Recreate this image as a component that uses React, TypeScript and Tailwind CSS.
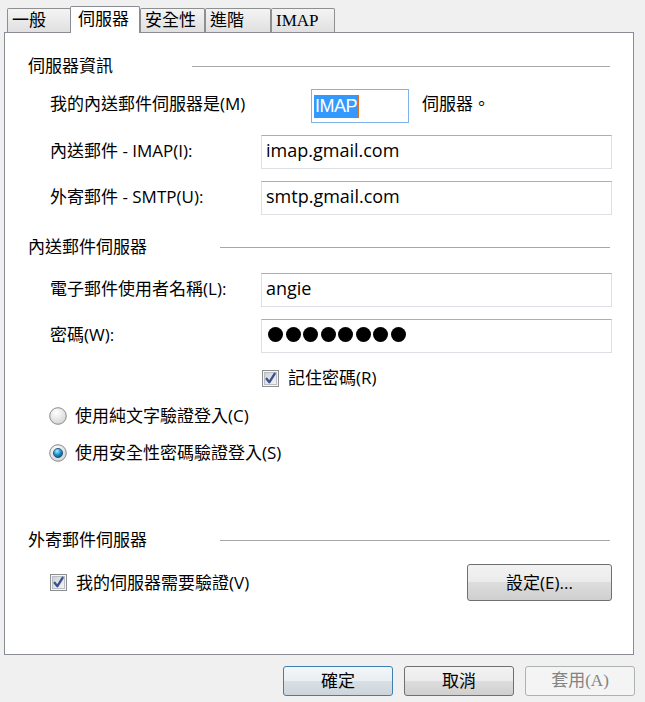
import React from "react"

const font = "font-['Open_Sans','Noto_Sans_CJK_TC',sans-serif]"
const serif = "font-['Liberation_Serif','Noto_Sans_CJK_TC',serif]"

const Tab = ({ label, active, w }: { label: string; active?: boolean; w: string }) => {
    if (active) {
        return (
            <div className={`${w} -ml-[1px] h-[27px] -mb-[1px] relative z-10 bg-white border border-b-0 border-[#898c95] rounded-t-[2px] pl-[7px] pt-[1px] text-[17px] leading-[24px] text-black`}>
                {label}
            </div>
        )
    }
    return (
        <div className={`${w} h-[24px] bg-[linear-gradient(to_bottom,#f4f4f4,#e0e0e0)] border border-b-0 border-[#8e8f8f] rounded-t-[2px] pl-[4px] text-[17px] leading-[24px] text-black`}>
            {label}
        </div>
    )
}

const SectionHeader = ({ title, w }: { title: string; w: string }) => (
    <div className="flex items-center h-[26px] pl-[23px] pr-[23px]">
        <div className={`${w} text-[17px] text-black`}>{title}</div>
        <div className="flex-1 h-px bg-[#a8a8a8]" />
    </div>
)

const TextBox = ({ children }: { children?: React.ReactNode }) => (
    <div className="w-[351px] h-[34px] border border-[#dcdfe3] border-t-[#abadb3] bg-white flex items-center pl-[4px] pb-[3px] text-[18px] text-black">
        {children}
    </div>
)

const Check = () => (
    <svg width="17" height="17" viewBox="0 0 17 17">
        <defs>
            <linearGradient id="cbg" x1="0" y1="0" x2="1" y2="1">
                <stop offset="0" stopColor="#cbcfd5" />
                <stop offset="1" stopColor="#f6f6f6" />
            </linearGradient>
        </defs>
        <rect x="0.5" y="0.5" width="16" height="16" fill="#f6f6f6" stroke="#8e8f8f" />
        <rect x="2.5" y="2.5" width="12" height="12" fill="url(#cbg)" stroke="#b9bec6" />
        <path d="M4.6 8.8 L7.4 12.2 L12.6 3.8" fill="none" stroke="#3b4f8c" strokeWidth="2.3" strokeLinecap="round" strokeLinejoin="round" />
    </svg>
)

const Radio = ({ on }: { on?: boolean }) => (
    <svg width="18" height="18" viewBox="0 0 18 18">
        <defs>
            <radialGradient id="rbg" cx="0.4" cy="0.3" r="0.8">
                <stop offset="0" stopColor="#ffffff" />
                <stop offset="1" stopColor="#cfcfcf" />
            </radialGradient>
            <radialGradient id="rdot" cx="0.4" cy="0.3" r="0.8">
                <stop offset="0" stopColor="#a6ecff" />
                <stop offset="0.5" stopColor="#1f8fd0" />
                <stop offset="1" stopColor="#0a3f6e" />
            </radialGradient>
        </defs>
        <circle cx="9" cy="9" r="8.3" fill="url(#rbg)" stroke="#8a8a8a" />
        {on && <circle cx="9" cy="9" r="4.6" fill="url(#rdot)" stroke="#17486f" strokeWidth="0.8" />}
    </svg>
)

const btn = "h-[30px] w-[110px] rounded-[3px] border text-[17px] flex items-center justify-center"
const grayGrad = "bg-[linear-gradient(to_bottom,#f2f2f2_0%,#ebebeb_50%,#dddddd_50%,#cfcfcf_100%)]"

export default function App() {
    return (
        <div className={`w-[645px] h-[702px] bg-[#f0f0f0] flex flex-col ${font}`}>

            <div className={`h-[32px] flex items-end pl-[7px] ${serif}`}>
                <Tab label="一般" w="w-[64px]" />
                <Tab label="伺服器" w="w-[70px]" active />
                <Tab label="安全性" w="w-[65px]" />
                <Tab label="進階" w="w-[66px]" />
                <Tab label="IMAP" w="w-[64px]" />
            </div>

            <div className="ml-[4px] w-[630px] h-[623px] border border-[#898c95] bg-white flex flex-col">

                <div className="mt-[20px]">
                    <SectionHeader title="伺服器資訊" w="w-[164px]" />
                </div>

                <div className="mt-[10px] h-[34px] flex items-center pl-[45px] text-[17px] text-black">
                    <div className="w-[261px] -mt-[4px]">我的內送郵件伺服器是(M)</div>
                    <div className="w-[98px] h-[34px] border border-[#7eb4ea] bg-white flex items-center pl-[2px]">
                        <span className="bg-[#3399ff] text-white text-[18px] leading-[23px] px-[1px] font-['Liberation_Sans',sans-serif] tracking-[-0.5px]">IMAP</span>
                        <span className="w-px h-[23px] bg-[#e07020]" />
                    </div>
                    <div className="ml-[13px] -mt-[4px]">伺服器。</div>
                </div>

                <div className="mt-[12px] flex items-center pl-[45px] text-[17px] text-black">
                    <div className="w-[211px] -mt-[3px]">內送郵件 - IMAP(I):</div>
                    <TextBox>imap.gmail.com</TextBox>
                </div>

                <div className="mt-[12px] flex items-center pl-[45px] text-[17px] text-black">
                    <div className="w-[211px] -mt-[3px]">外寄郵件 - SMTP(U):</div>
                    <TextBox>smtp.gmail.com</TextBox>
                </div>

                <div className="mt-[19px]">
                    <SectionHeader title="內送郵件伺服器" w="w-[192px]" />
                </div>

                <div className="mt-[13px] flex items-center pl-[45px] text-[17px] text-black">
                    <div className="w-[211px] -mt-[3px]">電子郵件使用者名稱(L):</div>
                    <TextBox>angie</TextBox>
                </div>

                <div className="mt-[12px] flex items-center pl-[45px] text-[17px] text-black">
                    <div className="w-[211px] -mt-[3px]">密碼(W):</div>
                    <TextBox>
                        <div className="flex gap-[2.5px] pl-[2px] -mt-[1px]">
                            {Array.from({ length: 8 }).map((_, i) => (
                                <div key={i} className="w-[15px] h-[15px] rounded-full bg-black" />
                            ))}
                        </div>
                    </TextBox>
                </div>

                <div className="mt-[13px] h-[24px] flex items-center pl-[257px] gap-[9px] text-[17px] text-black">
                    <Check />
                    <span>記住密碼(R)</span>
                </div>

                <div className="mt-[14px] h-[24px] flex items-center pl-[44px] gap-[8px] text-[17px] text-black">
                    <Radio />
                    <span>使用純文字驗證登入(C)</span>
                </div>

                <div className="mt-[13px] h-[24px] flex items-center pl-[44px] gap-[8px] text-[17px] text-black">
                    <Radio on />
                    <span>使用安全性密碼驗證登入(S)</span>
                </div>

                <div className="mt-[62px]">
                    <SectionHeader title="外寄郵件伺服器" w="w-[192px]" />
                </div>

                <div className="mt-[11px] h-[37px] flex items-center pl-[45px] pr-[21px] text-[17px] text-black">
                    <Check />
                    <span className="ml-[9px] flex-1">我的伺服器需要驗證(V)</span>
                    <button className={`${btn} w-[145px] h-[37px] border-[#707070] text-black ${grayGrad}`}>設定(E)...</button>
                </div>
            </div>

            <div className="mt-[11px] flex justify-end gap-[11px] pr-[10px]">
                <button className={`${btn} border-[#3c7fb1] text-black bg-[linear-gradient(to_bottom,#f3f6f9_0%,#e9eef2_50%,#d9dfe4_50%,#cdd5dc_100%)]`}>確定</button>
                <button className={`${btn} border-[#707070] text-black ${grayGrad}`}>取消</button>
                <button className={`${btn} border-[#adb2b5] bg-[#f4f4f4] text-[#838383] ${serif}`}>套用(A)</button>
            </div>
        </div>
    )
}
